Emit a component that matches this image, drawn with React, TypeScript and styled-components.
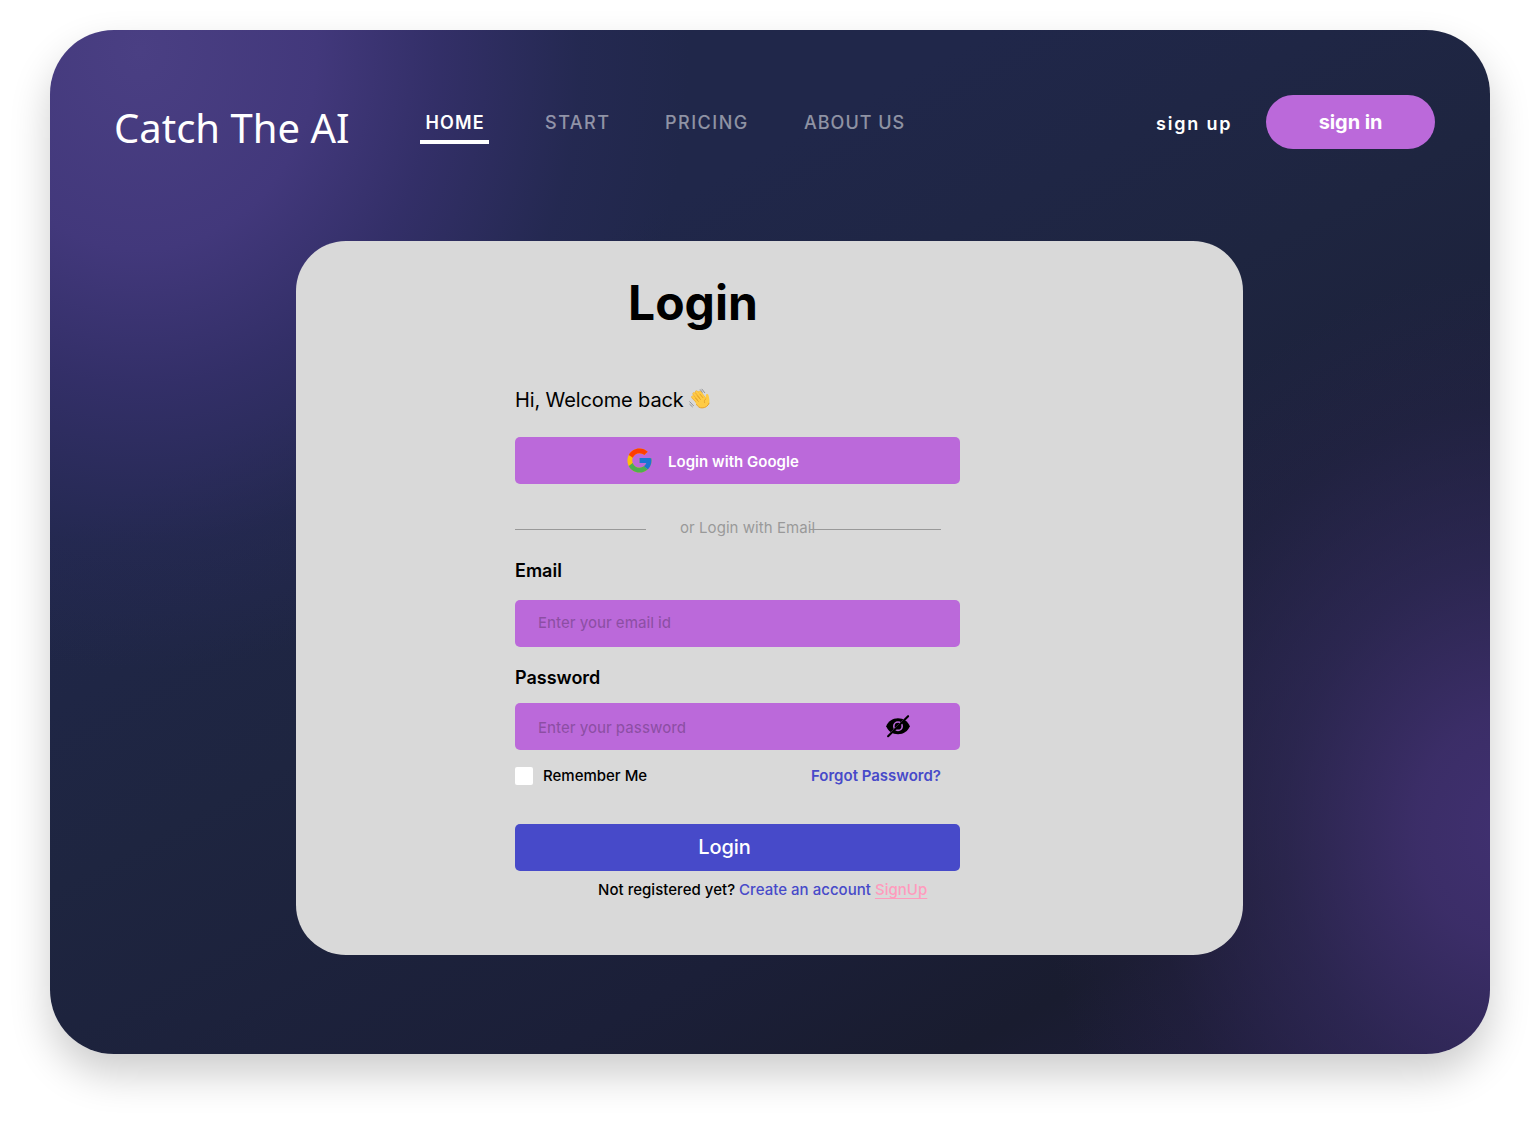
import React from "react";
import styled, { createGlobalStyle } from "styled-components";
import { FcGoogle } from "react-icons/fc";

const GlobalStyle = createGlobalStyle`
  *, *::before, *::after { box-sizing: border-box; }
  body { margin: 0; background: #fff; font-family: Inter, "Liberation Sans", sans-serif; }
  button, input { font: inherit; border: 0; }
  a { color: inherit; text-decoration: none; }
`;

const Page = styled.div`
  height: 1124px;
  padding: 30px 50px;
  overflow: hidden;
`;

const Frame = styled.main`
  width: 1440px;
  height: 1024px;
  border-radius: 64px;
  background:
    radial-gradient(ellipse 550px 620px at 90px 20px, #4a3f83 0%, rgba(68, 57, 126, 0.95) 32%, rgba(60, 51, 118, 0.68) 54%, rgba(48, 46, 102, 0.26) 80%, rgba(48, 45, 98, 0) 100%),
    radial-gradient(ellipse 470px 560px at 1460px 800px, #403070 0%, rgba(62, 47, 108, 0.92) 20%, rgba(53, 43, 95, 0.62) 48%, rgba(44, 36, 78, 0.28) 76%, rgba(40, 35, 72, 0) 100%),
    linear-gradient(152deg, #20274a 0%, #20274a 28%, #1e2540 48%, #1b1f38 72%, #191c2f 84%, #211e42 100%);
  box-shadow: 0 20px 40px rgba(0, 0, 0, 0.2);
`;

const Header = styled.header`
  display: flex;
  align-items: flex-start;
  height: 211px;
  padding: 65px 55px 0 64px;
  color: #fff;
`;

const Logo = styled.div`
  width: 306px;
  padding-top: 6px;
  font: 400 40px/54px "Noto Sans", sans-serif;
  white-space: nowrap;
`;

const Nav = styled.nav`
  display: flex;
  flex: 1;
  padding-top: 16px;
`;

const NavLink = styled.a<{ $active?: boolean; $width: number; $spacing: number }>`
  width: ${(p) => p.$width}px;
  height: 33px;
  margin-right: 50px;
  padding-left: ${(p) => (p.$active ? 5.5 : 6)}px;
  border-bottom: 4px solid ${(p) => (p.$active ? "#fff" : "transparent")};
  color: ${(p) => (p.$active ? "#fff" : "rgba(255, 255, 255, 0.5)")};
  font-size: 18px;
  font-weight: ${(p) => (p.$active ? 600 : 500)};
  line-height: 24px;
  letter-spacing: ${(p) => p.$spacing}px;
  white-space: nowrap;
`;

const SignUp = styled.a`
  width: 110px;
  padding-top: 17px;
  font-size: 18px;
  font-weight: 600;
  line-height: 24px;
  letter-spacing: 1.8px;
`;

const SignIn = styled.button`
  width: 169px;
  height: 54px;
  padding: 0;
  border-radius: 27px;
  background: #bb69da;
  color: #fff;
  font-size: 20px;
  font-weight: 700;
  letter-spacing: -0.1px;
`;

const Card = styled.section`
  width: 947px;
  height: 714px;
  margin-left: 246px;
  padding: 33px 283px 0 219px;
  border-radius: 50px;
  background: #d9d9d9;
  color: #000;
`;

const Title = styled.h1`
  height: 114px;
  margin: 0;
  padding-left: 113px;
  font-size: 48px;
  font-weight: 700;
  line-height: 58px;
`;

const Welcome = styled.p`
  display: flex;
  height: 49px;
  margin: 0;
  font-size: 20px;
  line-height: 24px;
  letter-spacing: -0.12px;
  white-space: nowrap;

  svg { margin-left: 5px; }
`;

const GoogleButton = styled.button`
  display: flex;
  align-items: center;
  gap: 14px;
  width: 100%;
  height: 47px;
  padding: 0 0 0 110px;
  border-radius: 5px;
  background: #bb69da;
  color: #fff;
  font-size: 15px;
  font-weight: 600;

  span { padding-top: 2px; letter-spacing: 0.03px; }
`;

const Divider = styled.div`
  display: flex;
  height: 73px;
  padding-top: 34px;
  color: #999;
  font-size: 15px;
  line-height: 20px;
  letter-spacing: 0.06px;
  white-space: nowrap;
`;

const Rule = styled.i`
  width: 131px;
  height: 1px;
  margin-top: 11px;
  background: #999;
`;

const DividerText = styled.span`
  width: 164px;
  padding-left: 34px;
`;

const Label = styled.label<{ $height: number; $top?: number }>`
  display: block;
  height: ${(p) => p.$height}px;
  padding-top: ${(p) => p.$top ?? 0}px;
  font-size: 18px;
  font-weight: 600;
  line-height: 28px;
`;

const Field = styled.div<{ $shift: number }>`
  display: flex;
  align-items: center;
  height: 47px;
  padding: 0 50px 0 23px;
  border-radius: 5px;
  background: #bb69da;

  input { margin-top: ${(p) => p.$shift}px; }
  svg { margin-bottom: 1px; }
`;

const Input = styled.input`
  flex: 1;
  min-width: 0;
  padding: 0;
  background: transparent;
  outline: none;
  font-size: 15px;
  font-weight: 500;

  &::placeholder { color: rgba(0, 0, 0, 0.25); opacity: 1; }
`;

const Options = styled.div`
  display: flex;
  align-items: flex-start;
  height: 74px;
  padding: 17px 19px 0 0;
  font-size: 15px;
  line-height: 18px;
`;

const Check = styled.span`
  width: 18px;
  height: 18px;
  margin-right: 10px;
  border-radius: 2px;
  background: #fff;
`;

const Remember = styled.span`
  font-weight: 500;
`;

const Forgot = styled.a`
  margin-left: auto;
  color: #474ac9;
  font-weight: 600;
`;

const LoginButton = styled.button`
  display: block;
  width: 100%;
  height: 47px;
  padding: 0 26px 1px 0;
  border-radius: 5px;
  background: #474ac9;
  color: #fff;
  font-size: 20px;
  font-weight: 500;
  letter-spacing: -0.1px;
`;

const Register = styled.p`
  display: flex;
  gap: 4px;
  margin: 0;
  padding: 9px 0 0 83px;
  font-size: 15px;
  font-weight: 500;
  line-height: 20px;
  letter-spacing: 0.03px;
  white-space: nowrap;
`;

const CreateLink = styled.a`
  color: #474ac9;
`;

const SignUpLink = styled.a`
  color: #ff9bbd;
  text-decoration: underline;
  text-decoration-thickness: 1px;
  text-underline-offset: 3px;
`;

const WavingHand = () => (
  <svg width="22" height="22" viewBox="0 0 22 22" fill="none">
    <path d="m3.700 9 6.500 7M4.900 5.800l7 8.200M7.500 4l6.800 8.500M10.700 4.200l5.300 7" stroke="#f2ad2e" strokeWidth="2.900" strokeLinecap="round" />
    <path d="m3.800 8.800 6.500 7M5 5.600l7 8.200M7.600 3.800l6.800 8.500M10.800 4l5.300 7" stroke="#ffcb45" strokeWidth="2.100" strokeLinecap="round" />
    <path d="M6.300 14.200 14 8.200c1.500 1.600 2.200 2.300 2.900 2.500.3-1.600-.7-3 .3-4.300.7-.8 1.900-.4 2.200.6.600 2.800 1.600 5.500.7 8.300-1 3.200-5.200 5.400-8.500 4.400-2.300-.7-3.900-3.300-5.300-5.500Z" fill="#ffcb45" />
    <path d="M7.500 16.500c1.400 2.200 3 3.500 5.600 3.400 3.200 0 6-1.900 7-4.700" stroke="#e8a22b" strokeWidth="1" strokeLinecap="round" />
    <path d="M16.900 10.700c-1.500 1-1.900 2.500-1.300 4M6.600 10.300l2.800 3.100M8.400 7.900l3.100 3.600m-.4-5.200 2.700 3.300" stroke="#dc9928" strokeWidth=".75" strokeLinecap="round" />
    <path d="m13 1.200 2.700 3.500M11.300 1.700l2 2.600M.7 13.700l3.800 4M.8 16.400l2.600 2.400" stroke="#85878c" strokeWidth=".85" strokeLinecap="round" />
  </svg>
);

const EyeOff = () => (
  <svg width="24" height="24" viewBox="0 0 24 24" fill="none">
    <path d="M.2 12.300C2 7.500 6.500 4.300 12 4.300s10 3.200 11.800 8C22 17.100 17.500 20.300 12 20.300S2 17.100.2 12.300Z" fill="#000" />
    <circle cx="12" cy="12.200" r="4.200" stroke="#bb69da" strokeWidth="1.600" />
    <path d="M1.400 21.600 20.900 2.100" stroke="#bb69da" strokeWidth=".8" />
    <path d="M2.100 22.200 22.100 2.200" stroke="#000" strokeWidth="2.100" strokeLinecap="round" />
  </svg>
);

export default function App() {
  return (
    <Page>
      <GlobalStyle />
      <Frame>
        <Header>
          <Logo>Catch The AI</Logo>
          <Nav>
            <NavLink href="#" $active $width={69} $spacing={1.1}>HOME</NavLink>
            <NavLink href="#" $width={70} $spacing={1.5}>START</NavLink>
            <NavLink href="#" $width={89} $spacing={1.5}>PRICING</NavLink>
            <NavLink href="#" $width={110} $spacing={1}>ABOUT US</NavLink>
          </Nav>
          <SignUp href="#">sign up</SignUp>
          <SignIn>sign in</SignIn>
        </Header>
        <Card>
          <Title>Login</Title>
          <Welcome>Hi, Welcome back<WavingHand /></Welcome>
          <GoogleButton>
            <FcGoogle size={29} />
            <span>Login with Google</span>
          </GoogleButton>
          <Divider>
            <Rule />
            <DividerText>or Login with Email</DividerText>
            <Rule />
          </Divider>
          <Label htmlFor="email" $height={43}>Email</Label>
          <Field $shift={-2}>
            <Input id="email" placeholder="Enter your email id" />
          </Field>
          <Label htmlFor="password" $height={56} $top={17}>Password</Label>
          <Field $shift={2}>
            <Input id="password" type="password" placeholder="Enter your password" />
            <EyeOff />
          </Field>
          <Options>
            <Check />
            <Remember>Remember Me</Remember>
            <Forgot href="#">Forgot Password?</Forgot>
          </Options>
          <LoginButton>Login</LoginButton>
          <Register>
            Not registered yet?
            <CreateLink href="#">Create an account</CreateLink>
            <SignUpLink href="#">SignUp</SignUpLink>
          </Register>
        </Card>
      </Frame>
    </Page>
  );
}
